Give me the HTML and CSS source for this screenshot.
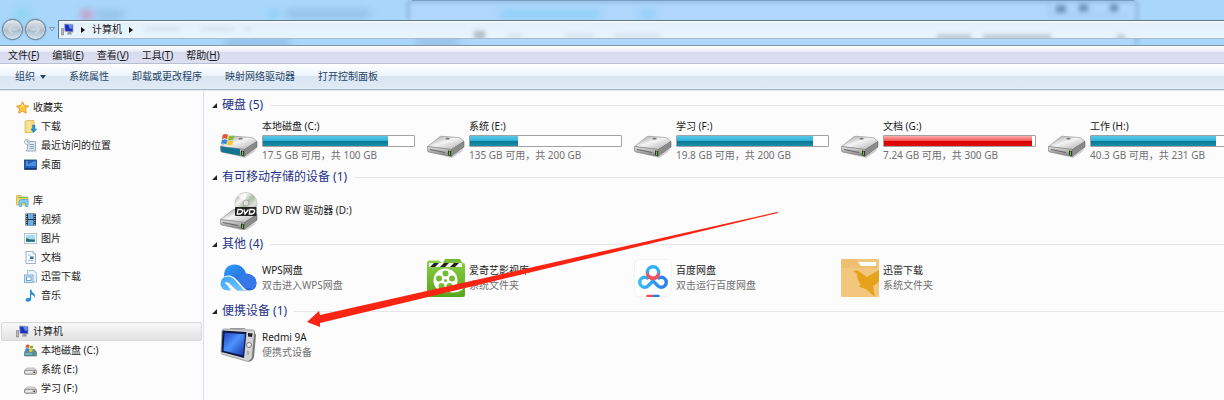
FILE: index.html
```html
<!DOCTYPE html>
<html lang="zh-CN">
<head>
    <meta charset="UTF-8">
    <meta name="viewport" content="width=device-width, initial-scale=1.0">
    <title>计算机</title>
    <link rel="stylesheet" href="styles.css">
</head>
<body>
<!-- 图标定义 -->
<svg class="defs" aria-hidden="true">
    <defs>
        <linearGradient id="top" x1="0" y1="0" x2="1" y2="1">
            <stop offset="0" stop-color="#8f8f8f"/><stop offset=".45" stop-color="#f4f4f4"/><stop offset="1" stop-color="#a9a9a9"/>
        </linearGradient>
        <linearGradient id="front" x1="0" y1="0" x2="0" y2="1">
            <stop offset="0" stop-color="#e4e4e4"/><stop offset="1" stop-color="#777"/>
        </linearGradient>
        <linearGradient id="cloud" x1="0" y1="0" x2="1" y2="1">
            <stop offset="0" stop-color="#2f9cf8"/><stop offset="1" stop-color="#1c55d2"/>
        </linearGradient>
        <linearGradient id="cloudLight" x1="0" y1="0" x2="1" y2="1">
            <stop offset="0" stop-color="#38a4fa"/><stop offset="1" stop-color="#7cc8ff"/>
        </linearGradient>
        <linearGradient id="green" x1="0" y1="0" x2="0" y2="1">
            <stop offset="0" stop-color="#8ccf45"/><stop offset="1" stop-color="#58a51d"/>
        </linearGradient>
        <linearGradient id="screen" x1="0" y1="0" x2="1" y2="1">
            <stop offset="0" stop-color="#1a3fc8"/><stop offset=".45" stop-color="#4d93fb"/><stop offset="1" stop-color="#1230b0"/>
        </linearGradient>
        <linearGradient id="disc" x1="0" y1="0" x2="1" y2="1">
            <stop offset="0" stop-color="#8a8a8a"/><stop offset=".3" stop-color="#f5f5f5"/><stop offset=".5" stop-color="#a9bf9e"/><stop offset=".7" stop-color="#e0e0e0"/><stop offset="1" stop-color="#7c7c7c"/>
        </linearGradient>
        <linearGradient id="loop" x1="0" y1="0" x2="1" y2="0">
            <stop offset="0" stop-color="#35bdf5"/><stop offset="1" stop-color="#2a7df0"/>
        </linearGradient>
        <linearGradient id="ring" x1="0" y1="0" x2="0" y2="1">
            <stop offset=".45" stop-color="#36aef5"/><stop offset=".7" stop-color="#ef5363"/>
        </linearGradient>
        <filter id="blur" filterUnits="userSpaceOnUse" x="0" y="-20" width="1224" height="90"><feGaussianBlur stdDeviation="4"/></filter>
        <filter id="soft" filterUnits="userSpaceOnUse" x="0" y="-20" width="1224" height="90"><feGaussianBlur stdDeviation="2"/></filter>
    </defs>

    <symbol id="drive" viewBox="0 0 38 38">
        <path d="M1 30 24 35 37 26 34 30 25 36Z" fill="#ccc"/>
        <path d="M.5 24.500 12.500 15Q13.500 14.300 15 14.300L31 15.500Q33 15.700 34 16.700L37 19.500 24.500 27.500Z" fill="url(#top)" stroke="#8a8a8a" stroke-width=".6"/>
        <path d="M.5 24.500 24.500 27.500 24 34.500 1.500 30Q.5 29.500.5 28Z" fill="url(#front)" stroke="#777" stroke-width=".6"/>
        <path d="M24.500 27.500 37 19.500V25L24 34.500Z" fill="#8b8b8b" stroke="#666" stroke-width=".6"/>
        <path d="M3 27.500 18 30.500" stroke="#666"/>
        <path d="M21 28.500 24 29V34L21 33.300Z" fill="#27401f"/>
        <path d="M22.500 29.500V33" stroke="#74c545"/>
        <ellipse cx="20.500" cy="16.700" rx="2.200" ry=".9" fill="#777"/>
    </symbol>
    <symbol id="flag" viewBox="0 0 16 16">
        <path d="M2 2Q5 0 8 2L7 7Q4 5 1 7Z" fill="#e8542a"/>
        <path d="M9 2.500Q12 4 15 2.500L14 7.500Q11 9 8 7.500Z" fill="#83bd38"/>
        <path d="M1 8Q4 6 7 8L6 13Q3 11 0 13Z" fill="#3a88d8"/>
        <path d="M8 8.500Q11 10 14 8.500L13 13.500Q10 15 7 13.500Z" fill="#f8c52a"/>
    </symbol>
    <symbol id="system" viewBox="0 0 38 38">
        <use href="#drive"/>
        <path d="M.5 24.500 20 27V33.500L1.500 30Z" fill="#137390"/>
        <use href="#flag" x="1" y="11" width="14" height="14"/>
    </symbol>
    <symbol id="dvd" viewBox="0 0 38 38">
        <use href="#drive" y="3"/>
        <circle cx="26" cy="11.500" r="11" fill="url(#disc)" stroke="#aaa" stroke-width=".5"/>
        <path d="M26 11 18 4Q21 1 26 1Z" fill="#fff" opacity=".7"/>
        <circle cx="26" cy="11" r="3" fill="#ddd" stroke="#999" stroke-width=".7"/>
        <rect x="15" y="15" width="21.500" height="9" rx="1" fill="#222"/>
        <g fill="none" stroke="#fff" stroke-width="1.300">
            <path d="M18 17.500H20.500Q23 17.500 22.500 19.700 22 22 19.500 22H17.300ZM24 17.500 25 22 28.500 17.500M30 17.500H32.500Q35 17.500 34.500 19.700 34 22 31.500 22H29.300Z"/>
        </g>
    </symbol>
    <symbol id="wps" viewBox="0 0 38 38">
        <path d="M4 17Q4 6 14.500 5.500 23 5.500 26 14.500 36.500 16 36.500 24 36.500 31.500 28 31.500H17L4 20Z" fill="url(#cloud)"/>
        <path d="M26 14.500Q20 15 16 21L23 29 33 30Q36.500 28 36.500 24 36.500 16 26 14.500Z" fill="#3579e8"/>
        <path d="M8.500 31Q0 31 .5 24 1 16.500 8.500 16.500 13 16.500 17 21L24 29Q26 31 29 31.500H20Q15 31 15 31Z" fill="#fff"/>
        <path d="M8 31.500Q.5 31 .5 24.500 1 17.500 8 17.500 12 17.500 15.500 21.500L22 29Q24 31.500 26 31.500H18Q15 31 12.500 27.500L9.500 24.500Q7 22.500 4.500 23.500 8 26 11 31.500Z" fill="url(#cloudLight)"/>
    </symbol>
    <symbol id="film" viewBox="0 0 38 38">
        <path d="M16 4 18 0H33L36 5V9H16Z" fill="#76b936"/>
        <path d="M0 4Q0 1.500 2 1.500H12L15 4H36Q38 4 38 7V36Q38 38 36 38H2Q0 38 0 36Z" fill="url(#green)"/>
        <path d="M2 4H35V8H2Z" fill="#f5f5f5"/>
        <path d="M3 8 7 4H12L8 8ZM13 8 17 4H22L18 8ZM23 8 27 4H32L28 8Z" fill="#222"/>
        <circle cx="18.500" cy="21.500" r="12" fill="#fff"/>
        <g fill="#75bb35"><circle cx="18.500" cy="14.500" r="3"/><circle cx="25" cy="19.500" r="3"/><circle cx="22.500" cy="27" r="3"/><circle cx="14.500" cy="27" r="3"/><circle cx="12" cy="19.500" r="3"/><circle cx="18.500" cy="21.500" r="1.500"/></g>
        <path d="M25 31Q31 32 36 28V30Q30 35 22 33Z" fill="#fff"/>
    </symbol>
    <symbol id="baidu" viewBox="0 0 38 38">
        <rect x=".5" y=".5" width="37" height="37" rx="5" fill="#fff" stroke="#f2f2f2"/>
        <g fill="none" stroke-width="3.400">
            <path d="M14.500 20A5 5 0 1 0 14.500 26.500L19 22 23.500 26.500A5 5 0 1 0 23.500 20" stroke="url(#loop)"/>
            <circle cx="19" cy="13.500" r="5.700" stroke="url(#ring)"/>
            <path d="M14 16.500Q16 19.500 19 19.500 22 19.500 24 16.500" stroke="#ef5363"/>
        </g>
        <path d="M12.500 37H19" stroke="#ef4b5c" stroke-width="2.500"/>
        <path d="M19 37H25.500" stroke="#247ce8" stroke-width="2.500"/>
    </symbol>
    <symbol id="thunder" viewBox="0 0 38 38">
        <rect width="38" height="38" rx="1" fill="#f2c67c"/>
        <path d="M0 1Q0 0 1 0H16L19 7H38V9H0Z" fill="#e9b765" opacity=".5"/>
        <path d="M17 3H35V7H20Z" fill="#fff"/>
        <path d="M12 12.500Q15 10.500 18 12.500L26 18 38 11V22Q36 25 32 27L34 38 25 30 19 28Q17 27 20 26 16 21 16 15 15 13 12 12.500Z" fill="#e5a21a"/>
    </symbol>
    <symbol id="player" viewBox="0 0 38 38">
        <path d="M4 3 33 4Q35 4 34.500 7L32 32Q31.500 36 28 35.500L3 28.500Q1 28 1 26L2 5Q2 3 4 3Z" fill="#d3d3d3" stroke="#888" stroke-width=".7"/>
        <path d="M32 32 34.500 6 36 9 34 31Q33 35 28 35.500Z" fill="#777"/>
        <path d="M10 2.500H25" stroke="#999"/>
        <path d="M2.500 4.500 26.500 6 24 32 1.500 26Z" fill="#101a45"/>
        <path d="M4.500 6.800 25 8.200 23 29.500 3.500 24.800Z" fill="url(#screen)"/>
        <path d="M28 7 32.500 7.500 32 11 28 10.500Z" fill="#222"/>
        <circle cx="29" cy="19" r="2.500" fill="#eee" stroke="#666" stroke-width=".8"/>
        <path d="M28 25V29" stroke="#888"/>
    </symbol>

    <symbol id="pc" viewBox="0 0 13 13">
        <path d="M.5 5.500H2.500V12H.5Z" fill="#bbb" stroke="#777" stroke-width=".6"/>
        <path d="M3.500 1 12 1.500V9L4 8.500Z" fill="#1c2fc0" stroke="#aab" stroke-width=".8"/>
        <path d="M7 1.500 11.500 2V5L9 6Z" fill="#668cf2"/>
        <path d="M7 9H10L11 11.500H6Z" fill="#999"/>
    </symbol>
    <symbol id="star" viewBox="0 0 13 13">
        <path d="M6.500.7 8.300 4.500 12.500 5 9.500 8 10.300 12.200 6.500 10.200 2.700 12.200 3.500 8 .5 5 4.700 4.500Z" fill="#fcc63f" stroke="#e48a25" stroke-width=".8"/>
        <path d="M6.500 2.700 7.300 5.500 5 6Z" fill="#fff0a8"/>
    </symbol>
    <symbol id="download" viewBox="0 0 13 13">
        <path d="M1 1.500 3 .5H10V11.500L8 12.500H1Z" fill="#f6dc83" stroke="#d5af4c" stroke-width=".7"/>
        <path d="M5 2V12" stroke="#fff2b9"/>
        <path d="M8.500 5H11V9H12.800L9.700 12.700 6.700 9H8.500Z" fill="#2694d6" stroke="#1472b0" stroke-width=".4"/>
    </symbol>
    <symbol id="recent" viewBox="0 0 13 13">
        <path d="M3.500 2.500H11.500V12H2Q4 11 3.500 8Z" fill="#dce8f3" stroke="#8499b0" stroke-width=".8"/>
        <path d="M5.500 5.500H10M5.500 7.500H10M5.500 9.500H10" stroke="#6f8eb0" stroke-width=".8"/>
        <circle cx="3" cy="3" r="2.500" fill="#f7f7f7" stroke="#999" stroke-width=".7"/>
        <path d="M3 1.500V3H4.500" fill="none" stroke="#555" stroke-width=".6"/>
    </symbol>
    <symbol id="desktop" viewBox="0 0 13 13">
        <rect x=".5" y="2" width="12" height="9.500" fill="#2561b8" stroke="#173d78" stroke-width=".8"/>
        <path d="M1 8Q6 5 12 2.500V8Z" fill="#4b91dd"/>
        <path d="M1 10.500H12" stroke="#173a74"/>
        <path d="M2 4H4M2 6H4" stroke="#a8cff2" stroke-width=".8"/>
    </symbol>
    <symbol id="library" viewBox="0 0 13 13">
        <path d="M.5 1.500H5L6 3H12V11H.5Z" fill="#f4d36f" stroke="#d4a941" stroke-width=".7"/>
        <path d="M2 3.500H11.500" stroke="#7abf57"/>
        <path d="M3 12.500V8Q3 5.500 5.500 5.500H12V12.500H9.500V10Q9.500 8.500 7.500 8.500T5.500 10V12.500Z" fill="#7fcbf0" stroke="#3d9cca" stroke-width=".6"/>
    </symbol>
    <symbol id="video" viewBox="0 0 13 13">
        <rect x="1.500" y=".5" width="10.500" height="12" fill="#26313f"/>
        <path d="M4 1H9.500V6H4ZM4 7H9.500V12.500H4Z" fill="#69aee6"/>
        <path d="M2.700 1V12M10.800 1V12" stroke="#ccd5dc" stroke-dasharray="1 1"/>
    </symbol>
    <symbol id="picture" viewBox="0 0 13 13">
        <rect x=".4" y="1.500" width="12.200" height="10" fill="#fff" stroke="#9fb3c4" stroke-width=".8"/>
        <path d="M2 3H11V10H2Z" fill="#a4dcf5"/>
        <path d="M2 6Q6 8 11 7.500V10H2Z" fill="#26705c"/>
        <path d="M2 9H11V10H2Z" fill="#3682bd"/>
    </symbol>
    <symbol id="document" viewBox="0 0 13 13">
        <path d="M2 .5H9L11.500 3V12.500H2Z" fill="#f7fbff" stroke="#8aa1b6" stroke-width=".8"/>
        <path d="M9 .5V3H11.500M4 4H7M4 9.500H9.500" fill="none" stroke="#9ab2c8" stroke-width=".8"/>
        <path d="M6 5.500H9.500V8H6Z" fill="#376aa3"/>
    </symbol>
    <symbol id="folderDoc" viewBox="0 0 13 13">
        <path d="M3.500.5H10L12.500 3V12H3.500Z" fill="#e6f2fc" stroke="#8fb0cf" stroke-width=".8"/>
        <rect x=".5" y="5" width="8.500" height="7.500" fill="#d1e9fa" stroke="#6c9fcc" stroke-width=".8"/>
        <rect x="2.500" y="7" width="4.500" height="3.500" fill="#fff" stroke="#4b8bc4" stroke-width=".8"/>
    </symbol>
    <symbol id="music" viewBox="0 0 13 13">
        <path d="M6 .5H7.200Q7.500 3 10 4.500 11.800 6 10.500 9 10.500 6 7.200 5.500V10Q7 12.500 4 12.700 1.500 12.500 1.500 10.700 2 8.500 6 8.700Z" fill="#2a8fd4"/>
    </symbol>
    <symbol id="disk" viewBox="0 0 13 13">
        <path d="M.5 7.500 3 5H10.500L12.500 7.500Z" fill="#e2e2e2" stroke="#999" stroke-width=".6"/>
        <rect x=".5" y="7.300" width="12" height="4" rx="1" fill="#cfcfcf" stroke="#777" stroke-width=".8"/>
        <path d="M2 9H8" stroke="#fff"/><path d="M9.500 9.300H11" stroke="#333" stroke-width="1.300"/>
    </symbol>
    <symbol id="sysDisk" viewBox="0 0 13 13">
        <path d="M.5 8 3 5.500H10.500L12.500 8V12H.5Z" fill="#5b8f98" stroke="#456b73" stroke-width=".6"/>
        <path d="M1 10H8" stroke="#8fd0df"/>
        <use href="#flag" x="1" y="0" width="9" height="9"/>
    </symbol>
</svg>

<header class="glass">
    <svg class="ghost" width="1224" height="45" aria-hidden="true">
        <g filter="url(#blur)">
            <path d="M408 2H1137V45H408Z" fill="#b2d6fb" opacity=".8"/>
            <path d="M14 14H30" stroke="#7bd4ee" stroke-width="10" opacity=".7"/>
            <path d="M95 15H124M286 14H370" stroke="#7ea9d6" stroke-width="7" opacity=".6"/>
            <path d="M82 15H91" stroke="#dd6b9c" stroke-width="7"/>
            <path d="M270 14H278M500 14H600M640 14H655" stroke="#5cc9f3" stroke-width="7" opacity=".6"/>
            <path d="M225 43H290M415 42H460" stroke="#5f8fbd" stroke-width="4" opacity=".7"/>
        </g>
        <path d="M412 .5H1134" stroke="#7ba2c8"/>
        <g filter="url(#soft)" fill="none" stroke="#5c7da5">
            <path d="M408 20V4Q408 1 411 1H1134Q1137 1 1137 4V45" stroke-width="2" opacity=".5"/>
            <path d="M1056 9H1066M1079 8H1088M1110 8H1118" stroke-width="7" opacity=".8"/>
            <path d="M1049 2V12Q1049 15 1052 15H1128" opacity=".3"/>
        </g>
    </svg>
    <button class="round" type="button" aria-label="后退"><svg viewBox="0 0 20 20"><path d="M15 10H6M10 6 6 10 10 14"/></svg></button>
    <button class="round" type="button" aria-label="前进"><svg viewBox="0 0 20 20"><path d="M5 10H14M10 6 14 10 10 14"/></svg></button>
    <button class="history" type="button" aria-label="历史"><svg viewBox="0 0 6 5"><path d="M.5.5H5.500L3 4Z"/></svg></button>
    <nav class="address" aria-label="地址">
        <svg class="trace" width="1166" height="17" aria-hidden="true">
            <g filter="url(#soft)" stroke="#5d6c7b" opacity=".4" fill="none">
                <path d="M86 8H120M142 8H175M186 8H192M448 15H463M505 15H535M555 15H602" stroke-width="4" opacity=".3"/>
                <path d="M415 14H426" stroke-width="8"/>
                <path d="M878 16H912M924 16H992M1058 16H1066" stroke-width="4"/>
            </g>
        </svg>
        <svg class="mini"><use href="#pc"/></svg>
        <span class="sep"></span>
        <a href="#">计算机</a>
        <span class="sep"></span>
    </nav>
</header>

<nav class="menu" aria-label="菜单">
    <button type="button">文件(<u>F</u>)</button>
    <button type="button">编辑(<u>E</u>)</button>
    <button type="button">查看(<u>V</u>)</button>
    <button type="button">工具(<u>T</u>)</button>
    <button type="button">帮助(<u>H</u>)</button>
</nav>

<div class="toolbar">
    <button class="organize" type="button">组织</button>
    <button type="button">系统属性</button>
    <button type="button">卸载或更改程序</button>
    <button type="button">映射网络驱动器</button>
    <button type="button">打开控制面板</button>
</div>

<div class="panes">
    <!-- 导航窗格 -->
    <nav class="tree" aria-label="导航">
        <ul>
            <li><a class="root" href="#"><svg class="mini"><use href="#star"/></svg>收藏夹</a></li>
            <li><a href="#"><svg class="mini"><use href="#download"/></svg>下载</a></li>
            <li><a href="#"><svg class="mini"><use href="#recent"/></svg>最近访问的位置</a></li>
            <li><a href="#"><svg class="mini"><use href="#desktop"/></svg>桌面</a></li>
        </ul>
        <ul>
            <li><a class="root" href="#"><svg class="mini"><use href="#library"/></svg>库</a></li>
            <li><a href="#"><svg class="mini"><use href="#video"/></svg>视频</a></li>
            <li><a href="#"><svg class="mini"><use href="#picture"/></svg>图片</a></li>
            <li><a href="#"><svg class="mini"><use href="#document"/></svg>文档</a></li>
            <li><a href="#"><svg class="mini"><use href="#folderDoc"/></svg>迅雷下载</a></li>
            <li><a href="#"><svg class="mini"><use href="#music"/></svg>音乐</a></li>
        </ul>
        <ul>
            <li><a class="root selected" href="#"><svg class="mini"><use href="#pc"/></svg>计算机</a></li>
            <li><a href="#"><svg class="mini"><use href="#sysDisk"/></svg>本地磁盘 (C:)</a></li>
            <li><a href="#"><svg class="mini"><use href="#disk"/></svg>系统 (E:)</a></li>
            <li><a href="#"><svg class="mini"><use href="#disk"/></svg>学习 (F:)</a></li>
        </ul>
    </nav>

    <!-- 文件窗格 -->
    <main class="content">
        <h2>硬盘 (5)</h2>
        <div class="items drives">
            <div class="item">
                <svg class="icon"><use href="#system"/></svg>
                <div class="info">
                    <p>本地磁盘 (C:)</p>
                    <div class="bar"><div class="used" style="width: 83%"></div></div>
                    <p class="note">17.5 GB 可用，共 100 GB</p>
                </div>
            </div>
            <div class="item">
                <svg class="icon"><use href="#drive"/></svg>
                <div class="info">
                    <p>系统 (E:)</p>
                    <div class="bar"><div class="used" style="width: 32%"></div></div>
                    <p class="note">135 GB 可用，共 200 GB</p>
                </div>
            </div>
            <div class="item">
                <svg class="icon"><use href="#drive"/></svg>
                <div class="info">
                    <p>学习 (F:)</p>
                    <div class="bar"><div class="used" style="width: 90%"></div></div>
                    <p class="note">19.8 GB 可用，共 200 GB</p>
                </div>
            </div>
            <div class="item">
                <svg class="icon"><use href="#drive"/></svg>
                <div class="info">
                    <p>文档 (G:)</p>
                    <div class="bar"><div class="used full" style="width: 98%"></div></div>
                    <p class="note">7.24 GB 可用，共 300 GB</p>
                </div>
            </div>
            <div class="item">
                <svg class="icon"><use href="#drive"/></svg>
                <div class="info">
                    <p>工作 (H:)</p>
                    <div class="bar"><div class="used" style="width: 83%"></div></div>
                    <p class="note">40.3 GB 可用，共 231 GB</p>
                </div>
            </div>
        </div>

        <h2>有可移动存储的设备 (1)</h2>
        <div class="items">
            <div class="item">
                <svg class="icon"><use href="#dvd"/></svg>
                <div class="info"><p>DVD RW 驱动器 (D:)</p></div>
            </div>
        </div>

        <h2>其他 (4)</h2>
        <div class="items">
            <div class="item">
                <svg class="icon"><use href="#wps"/></svg>
                <div class="info"><p>WPS网盘</p><p class="note">双击进入WPS网盘</p></div>
            </div>
            <div class="item">
                <svg class="icon"><use href="#film"/></svg>
                <div class="info"><p>爱奇艺影视库</p><p class="note">系统文件夹</p></div>
            </div>
            <div class="item">
                <svg class="icon"><use href="#baidu"/></svg>
                <div class="info"><p>百度网盘</p><p class="note">双击运行百度网盘</p></div>
            </div>
            <div class="item">
                <svg class="icon"><use href="#thunder"/></svg>
                <div class="info"><p>迅雷下载</p><p class="note">系统文件夹</p></div>
            </div>
        </div>

        <h2>便携设备 (1)</h2>
        <div class="items">
            <div class="item">
                <svg class="icon"><use href="#player"/></svg>
                <div class="info"><p>Redmi 9A</p><p class="note">便携式设备</p></div>
            </div>
        </div>
    </main>
</div>

<!-- 红色箭头标注 -->
<svg class="arrow" viewBox="0 0 474 117" aria-hidden="true">
    <path d="M1 112 13 101 14 105 471 2 472 3 14 113 14 117Z" fill="#f92414"/>
</svg>
</body>
</html>
```
FILE: styles.css
```css
* {
    box-sizing: border-box;
}

body {
    position: relative;
    margin: 0;
    height: 100vh;
    display: flex;
    flex-direction: column;
    overflow: hidden;
    background-color: #fcfcfc;
    color: #1a1a1a;
    font-family: "Noto Sans", "Noto Sans CJK SC", sans-serif;
    font-size: 10px;
    line-height: 15px;
}

p, ul, h2 {
    margin: 0;
    padding: 0;
}

ul {
    list-style: none;
}

a {
    color: inherit;
    text-decoration: none;
}

button {
    padding: 0;
    border: none;
    background: none;
    color: inherit;
    font: inherit;
    white-space: nowrap;
}

.defs {
    position: absolute;
    width: 0;
    height: 0;
}

.mini {
    width: 13px;
    height: 13px;
    flex: none;
}

/* 标题栏和地址栏 */
.glass {
    position: relative;
    display: flex;
    align-items: center;
    flex: none;
    height: 46px;
    padding: 14px 0 0 2px;
    border-bottom: 1px solid #8195ab;
    background-color: #a9d7fb;
    overflow: hidden;
}

.ghost, .trace {
    position: absolute;
    top: 0;
    left: 0;
}

.round {
    position: relative;
    width: 21px;
    height: 21px;
    margin-right: 2px;
    border: 1px solid #64798c;
    border-radius: 50%;
    background: linear-gradient(#e2e9ef, #b9c5d0 48%, #a9b9c7 52%, #d2e3ee);
    box-shadow: inset 0 0 2px #fff, 0 0 2px #7790a8;
}

.round svg {
    display: block;
    fill: none;
    stroke: #ccd7e0;
    stroke-width: 2;
}

.history {
    position: relative;
    display: flex;
    width: 6px;
    margin: 0 3px 0 1px;
}

.history svg {
    width: 6px;
    height: 5px;
    fill: #d5e8f7;
    stroke: #7796b3;
}

.address {
    position: relative;
    display: flex;
    align-items: center;
    gap: 7px;
    flex: 1;
    height: 19px;
    padding-left: 2px;
    border: 1px solid #5c7788;
    border-right: none;
    border-bottom-color: #a9bac9;
    background: linear-gradient(#e5f0f9, #e8f5fe);
    box-shadow: inset 0 1px #fff;
    overflow: hidden;
}

.sep {
    border: 3px solid transparent;
    border-left: 4px solid #111;
    border-right: none;
}

/* 菜单栏 */
.menu {
    display: flex;
    align-items: center;
    gap: 13px;
    flex: none;
    height: 18px;
    padding: 2px 0 0 8px;
    border-bottom: 1px solid #b9bed0;
    background: linear-gradient(#fff, #e8eaf5 35%, #d8daef 36%, #dddff2);
}

/* 工具栏 */
.toolbar {
    display: flex;
    gap: 23px;
    flex: none;
    height: 26px;
    padding-left: 15px;
    border-bottom: 1px solid #a8b6c6;
    background: linear-gradient(#fff, #edf4fb 46%, #dae5f2 47%, #dfeaf5);
    color: #274566;
}

.organize {
    display: flex;
    align-items: center;
    gap: 5px;
}

.organize::after {
    content: "";
    border: 3px solid transparent;
    border-top: 4px solid #274566;
    border-bottom: none;
}

.panes {
    display: flex;
    flex: 1;
    min-height: 0;
    border-top: 1px solid #dfeaf6;
}

/* 左侧导航 */
.tree {
    flex: none;
    width: 204px;
    padding: 7px 1px;
    border-right: 1px solid #d9e3ee;
}

.tree ul {
    margin-bottom: 17px;
}

.tree a {
    display: flex;
    align-items: center;
    gap: 4px;
    height: 19px;
    padding-left: 22px;
    border: 1px solid transparent;
    border-radius: 2px;
}

.tree .root {
    padding-left: 14px;
}

.tree .selected {
    border-color: #d9d9d9;
    background: linear-gradient(#f8f8f8, #e3e3e3);
}

/* 右侧内容 */
.content {
    flex: 1;
    min-width: 0;
    padding-top: 6px;
    overflow: hidden;
}

h2 {
    display: flex;
    align-items: center;
    height: 16px;
    padding-left: 8px;
    color: #1e3287;
    font-size: 12px;
    font-weight: normal;
    line-height: 16px;
}

h2::before {
    content: "";
    margin-right: 5px;
    border-left: 5px solid transparent;
    border-bottom: 5px solid #222;
}

h2::after {
    content: "";
    flex: 1;
    height: 1px;
    margin-left: 7px;
    background-color: #e4e7ea;
}

.items {
    display: flex;
    height: 51px;
    padding-left: 16px;
}

.drives {
    height: 56px;
}

.item {
    display: flex;
    align-items: center;
    gap: 4px;
    flex: none;
    width: 207px;
}

.icon {
    width: 38px;
    height: 38px;
    flex: none;
}

.info {
    width: 153px;
}

.note {
    color: #707070;
}

.bar {
    height: 12px;
    margin: 1px 0;
    border: 1px solid #a2a2a2;
    border-radius: 1px;
    background-color: #fff;
}

.used {
    height: 10px;
    background: linear-gradient(#5cc8e6, #30b4d8 45%, #0a7693 50%, #1790ac);
}

.full {
    background: linear-gradient(#ffb0b0, #f45a5a 45%, #d60000 50%, #e40d0d);
}

.arrow {
    position: absolute;
    top: 210px;
    left: 306px;
    width: 474px;
    height: 117px;
    pointer-events: none;
}
```
